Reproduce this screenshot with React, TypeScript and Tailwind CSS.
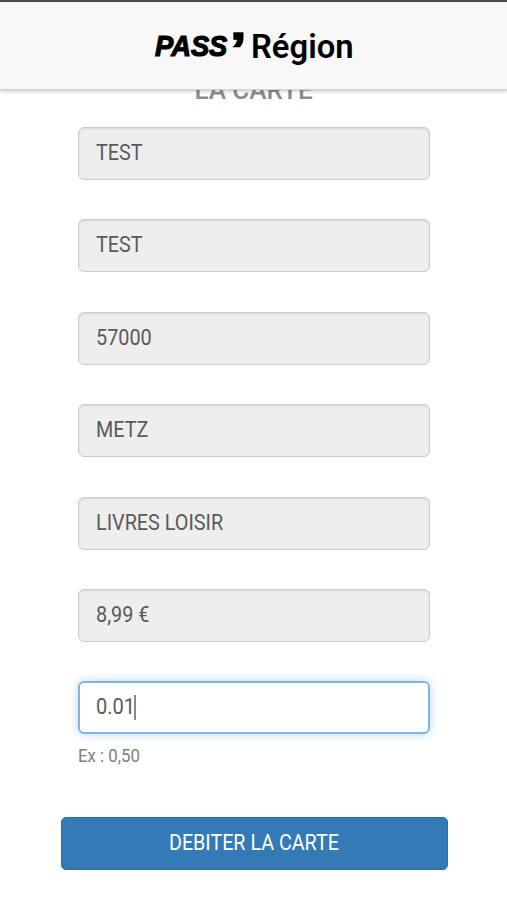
import React from 'react'

const fields = ['TEST', 'TEST', '57000', 'METZ', 'LIVRES LOISIR', '8,99 €']

function App() {
    return (
        <div className="h-[900px] w-[507px] overflow-hidden bg-white font-['Roboto',sans-serif] text-[#5a5a5a]">
            {/* Header */}
            <header className="relative z-10 flex h-[90px] border-t-2 border-b border-t-[#4b4b4d] border-b-[#d4d4d4] bg-[#f8f8f8] pt-[24px] pl-[155px] leading-[40px] text-black shadow-[0_1px_4px_rgba(0,0,0,0.25)]">
                <div className="w-[75px] shrink-0">
                    <span className="inline-block origin-left scale-x-[0.91] font-['Liberation_Sans',sans-serif] text-[30px] font-bold italic whitespace-nowrap [-webkit-text-stroke:1.2px_black] [stroke-linejoin:round]">
                        PASS
                    </span>
                </div>
                <div className="w-[21px] shrink-0 pt-[4px]">
                    <span className="inline-block origin-left scale-x-[1.25] font-['Liberation_Sans',sans-serif] text-[48px] font-bold [-webkit-text-stroke:1.4px_black]">
                        ’
                    </span>
                </div>
                <span className="inline-block origin-left scale-x-[0.965] text-[34px] font-semibold">Région</span>
            </header>

            {/* Content */}
            <main className="px-[78px]">
                <h1 className="-mt-[17px] h-[54px] text-center text-[26px] leading-[34px] font-medium text-[#8d8d8d]">
                    <span className="inline-block">LA CARTE</span>
                </h1>
                <form className="flex flex-col gap-[39.4px]">
                    {fields.map((value, i) => (
                        <div
                            key={i}
                            className="h-[53px] w-[352px] rounded-[6px] border-[1.5px] border-[#ccc] bg-[#eee] pl-[17px] text-[22px] leading-[49px] shadow-[inset_0_1px_2px_rgba(0,0,0,0.1)]"
                        >
                            <span className="inline-block origin-left scale-x-[0.9]">{value}</span>
                        </div>
                    ))}
                    <div className="flex h-[53px] w-[352px] items-start rounded-[6px] border-2 border-[#7db5e8] bg-white pl-[16px] text-[22px] leading-[47px] shadow-[0_0_8px_rgba(102,175,233,0.5)]">
                        <span className="inline-block w-[38px] origin-left scale-x-[0.91]">0.01</span>
                        <span className="mt-[12px] h-[25px] w-[2px] bg-[#888]" />
                    </div>
                </form>
                <p className="mt-[9px] text-[19px] leading-[26px] text-[#808080]">
                    <span className="inline-block origin-left scale-x-[0.885]">Ex : 0,50</span>
                </p>
                {/* Button */}
                <button
                    type="button"
                    className="-mx-[17px] mt-[48px] block h-[53px] w-[387px] rounded-[5px] border border-[#2e6da4] bg-[#337ab7] pr-[2px] pb-[3px] text-[22px] text-white"
                >
                    <span className="inline-block scale-x-[0.895]">DEBITER LA CARTE</span>
                </button>
            </main>
        </div>
    )
}

export default App
